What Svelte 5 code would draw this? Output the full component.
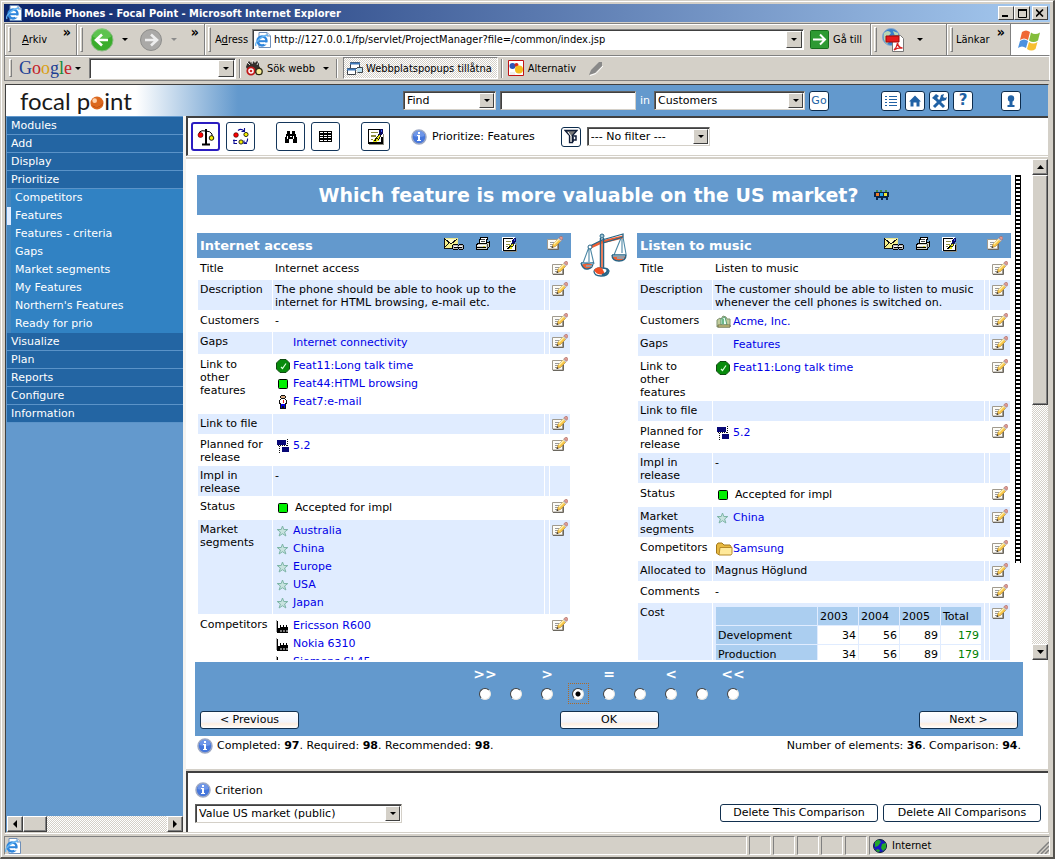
<script>
  const topMenu = ['Modules', 'Add', 'Display', 'Prioritize'];
  const subMenu = ['Competitors', 'Features', 'Features - criteria', 'Gaps', 'Market segments', 'My Features', "Northern's Features", 'Ready for prio'];
  const bottomMenu = ['Visualize', 'Plan', 'Reports', 'Configure', 'Information'];

  const elements = [
    {
      name: 'Internet access',
      rows: [
        { label: 'Title', text: 'Internet access' },
        { label: 'Description', text: 'The phone should be able to hook up to the internet for HTML browsing, e-mail etc.' },
        { label: 'Customers', text: '-' },
        { label: 'Gaps', links: [['', 'Internet connectivity']] },
        { label: 'Link to\nother\nfeatures', links: [['check', 'Feat11:Long talk time'], ['green', 'Feat44:HTML browsing'], ['person', 'Feat7:e-mail']] },
        { label: 'Link to file', text: '' },
        { label: 'Planned for release', links: [['release', '5.2']] },
        { label: 'Impl in release', text: '-', locked: true },
        { label: 'Status', status: 'Accepted for impl' },
        { label: 'Market segments', links: [['star', 'Australia'], ['star', 'China'], ['star', 'Europe'], ['star', 'USA'], ['star', 'Japan']] },
        { label: 'Competitors', links: [['factory', 'Ericsson R600'], ['factory', 'Nokia 6310'], ['factory', 'Siemens SL45']] }
      ]
    },
    {
      name: 'Listen to music',
      rows: [
        { label: 'Title', text: 'Listen to music' },
        { label: 'Description', text: 'The customer should be able to listen to music whenever the cell phones is switched on.' },
        { label: 'Customers', links: [['customer', 'Acme, Inc.']] },
        { label: 'Gaps', links: [['', 'Features']] },
        { label: 'Link to\nother\nfeatures', links: [['check', 'Feat11:Long talk time']] },
        { label: 'Link to file', text: '' },
        { label: 'Planned for release', links: [['release', '5.2']] },
        { label: 'Impl in release', text: '-', locked: true },
        { label: 'Status', status: 'Accepted for impl' },
        { label: 'Market segments', links: [['star', 'China']] },
        { label: 'Competitors', links: [['folder', 'Samsung']] },
        { label: 'Allocated to', text: 'Magnus Höglund' },
        { label: 'Comments', text: '-' },
        {
          label: 'Cost',
          cost: [
            ['Development', 34, 56, 89, 179],
            ['Production', 34, 56, 89, 179]
          ]
        }
      ]
    }
  ];

  const grades = ['>>', '', '>', '', '=', '', '<', '', '<<'];
  let grade = 3;
  let filter = '--- No filter ---';
  let criterion = 'Value US market (public)';
  let searchText = '';
  let googleText = '';
  let address = 'http://127.0.0.1/fp/servlet/ProjectManager?file=/common/index.jsp';
</script>

{#snippet ieIcon()}
  <svg class="ie" width="16" height="16" viewBox="0 0 16 16">
    <path d="M4 .5h8l3.500 3.500v11.500h-11.500z" fill="#fff" stroke="#6f8fb8" />
    <path d="M12 .5v3.500h3.500" fill="#dce8f6" stroke="#6f8fb8" />
    <circle cx="7" cy="9" r="4.500" fill="none" stroke="#2f86dc" stroke-width="2.400" />
    <path d="M4 9.200h7.500" stroke="#2f86dc" stroke-width="2" />
    <path d="M9 10.500h4v2h-4z" fill="#fff" />
    <path d="M1 14c-2-3 5-10 12-11" fill="none" stroke="#65b5f3" stroke-width="1.300" />
  </svg>
{/snippet}

{#snippet infoIcon()}
  <svg width="16" height="16" viewBox="0 0 16 16">
    <circle cx="8" cy="8" r="7" fill="#4677dc" stroke="#9ea9c4" stroke-width="1.500" />
    <path d="M2.500 7a5.500 5.500 0 0 1 11 0q-5 2-11 0" fill="#7fa4ee" opacity=".7" />
    <path d="M7 3h2v2h-2zM6 6h3v5h1v1h-4v-1h1v-4h-1z" fill="#fff" />
  </svg>
{/snippet}

{#snippet editIcon()}
  <svg width="16" height="16" viewBox="0 0 16 16">
    <path d="M.5 3.500h10v9.500h-10z" fill="#fdfcf7" stroke="#a09a8e" />
    <path d="M1 13.500h10.500v-6" fill="none" stroke="#6b675f" />
    <path d="M3 6.500h4M3 8.500h3M3 10.500h2" stroke="#9a9a9a" />
    <path d="M5 11.500l1-3.500 5.500-5.500 2.500 2.500-5.500 5.500z" fill="#f8c648" stroke="#a87e38" stroke-width=".6" />
    <path d="M6.800 8.300l5-5" stroke="#fff3b4" stroke-width="1.300" />
    <path d="M11 2.800l1-1 2.700 2.600-1 1z" fill="#c9ccd2" />
    <path d="M12 1.700l1.400-1.200h1.600l.8.800v1.500l-1.200 1.500z" fill="#e09a92" stroke="#a1655f" stroke-width=".6" />
    <path d="M4.500 12l.6-2 1.400 1.400z" fill="#222" />
  </svg>
{/snippet}

{#snippet noteIcon(size)}
  <svg width={size} height={size} viewBox="0 0 16 16" shape-rendering="crispEdges">
    <path d="M2 15h13v-9h1v10h-14z" fill="#8c8c80" />
    <path d="M.5.500h13v14h-13z" fill="#fff" />
    <path d="M12 1.500h-10.500v12.500h12.500v-6" fill="none" stroke="#000" stroke-width="1.200" />
    <path d="M4 4.500h6M4 7.500h4M4 10.500h2" stroke="#88883c" />
    <path d="M5 13l3-4 3 1v2l-2 1z" fill="#e6e619" />
    <path d="M8 10l4-5 1 2-2 4z" fill="#e6e619" stroke="#000" stroke-width=".8" />
    <path d="M5 13l3-3v2z" fill="#000" />
    <path d="M11 3l2-2h2v4l-2 2h-2z" fill="#08085e" />
    <path d="M13 2h1v2h-1z" fill="#4361ff" />
  </svg>
{/snippet}

{#snippet mailIcon()}
  <svg width="20" height="14" viewBox="0 0 20 14" shape-rendering="crispEdges">
    <path d="M.5 1.500h13v9h-13z" fill="#f4f08c" />
    <path d="M1 1h12v1l-6 5-6-5z" fill="#fffcc8" />
    <path d="M0 1.500h14M13.500 1v6" stroke="#e8e48c" />
    <path d="M.5 1v10h9M1 2l6 5 6-5M1 10l4-4" fill="none" stroke="#111" />
    <path d="M8.500 8.500l1-1h4l1 1 1-1h3l1 1v3l-1 1h-3l-1-1-1 1h-4l-1-1z" fill="#b9b9b9" stroke="#000" />
    <path d="M10 10.500h8" stroke="#000" />
    <path d="M10 9.500h3M15 9.500h3" stroke="#fff" />
  </svg>
{/snippet}

{#snippet printIcon()}
  <svg width="14" height="14" viewBox="0 0 14 14" shape-rendering="crispEdges">
    <path d="M4.500.500h7l-1.500 6h-7z" fill="#fff" stroke="#000" />
    <path d="M5 2.500h4M5 4.500h4" stroke="#444" />
    <path d="M.5 7.500l2-1h8l3-2v5l-2.500 3h-10.500z" fill="#d2d2c8" stroke="#000" />
    <path d="M1 8.500h9" stroke="#fff" />
    <path d="M1 10.500h9" stroke="#000" />
    <path d="M7 9.500h2" stroke="#e3d220" />
    <path d="M11.500 7v4" stroke="#555" />
  </svg>
{/snippet}

{#snippet linkIcon(kind)}
  <span class="link-icon">
    {#if kind === 'check'}
      <svg width="14" height="14" viewBox="0 0 14 14">
        <path d="M4 .5h6l3.500 3.500v6l-3.500 3.500h-6l-3.500-3.500v-6z" fill="#078b0b" stroke="#114b13" />
        <path d="M5 8l1.500 1.500 3.500-5" fill="none" stroke="#d9ffda" stroke-width="1.200" />
      </svg>
    {:else if kind === 'green'}
      <svg width="14" height="14" viewBox="0 0 14 14">
        <rect x="2.500" y="2.500" width="9" height="9" rx="1" fill="#00f100" stroke="#000" />
      </svg>
    {:else if kind === 'person'}
      <svg width="14" height="14" viewBox="0 0 14 14" shape-rendering="crispEdges">
        <path d="M5 0h4v1h1v2h-1v1h1v1h1v4h-1v5h-6v-5h-1v-4h1v-1h1v-1h-1v-2h1z" fill="#111" />
        <path d="M5 1h4v2h-4z" fill="#d9aa80" />
        <path d="M5 4h4v1h1v3h-1v1h-4v-1h-1v-3h1z" fill="#fff" />
        <path d="M6.500 4.500h1v3h-1z" fill="#e12020" />
        <path d="M5 9h4v4h-1v-2h-2v2h-1z" fill="#0000e8" />
      </svg>
    {:else if kind === 'release'}
      <svg width="14" height="14" viewBox="0 0 14 14" shape-rendering="crispEdges">
        <path d="M1 1h9v5h-9zM6 8h7v5h-7z" fill="#080876" />
        <path d="M11.500 0v7M3.500 7v7" stroke="#111" stroke-dasharray="1 1" />
        <path d="M2 6.500h9" stroke="#111" stroke-dasharray="1 1" />
      </svg>
    {:else if kind === 'star'}
      <svg width="14" height="14" viewBox="0 0 14 14">
        <path d="M6.500 2l1.300 3.500h4l-3.200 2.500 1.300 4-3.400-2.300-3.400 2.300 1.300-4-3.200-2.500h4z" fill="#c8e3df" stroke="#7eb5a7" />
      </svg>
    {:else if kind === 'factory'}
      <svg width="14" height="14" viewBox="0 0 14 14" shape-rendering="crispEdges">
        <path d="M1 2h1v7h2v-3h1v2h2v-2h1v2h2v-2h1v2h1v6h-11z" fill="#000" />
        <path d="M0 1h1v12h-1z" fill="#aaa" />
        <path d="M4 11h2v2h-2zM7 11h2v2h-2zM10 11h2v2h-2z" fill="#777" />
      </svg>
    {:else if kind === 'customer'}
      <svg width="16" height="14" viewBox="0 0 16 14">
        <path d="M1 5l3-2 1 1 2-3 3 1 1 2h3v8h-13z" fill="#c2cc9c" stroke="#7f9370" />
        <path d="M5 4l4-2 2 8h-6z" fill="#eafff4" stroke="#559c73" />
        <path d="M7 4v5" stroke="#42a267" stroke-width="1.500" />
        <path d="M2 10h12v2h-12z" fill="#e4df8e" stroke="#74724d" />
      </svg>
    {:else if kind === 'folder'}
      <svg width="17" height="14" viewBox="0 0 17 14">
        <path d="M.5 3l1.500-2h4l2 2h6l1 1.500v7l-1 1h-12l-1.500-1.500z" fill="#e8b940" stroke="#a37818" />
        <path d="M4 5.500h12v6l-1 1.500h-12z" fill="#ffe99a" stroke="#b78b28" />
      </svg>
    {/if}
  </span>
{/snippet}

{#snippet panel(element)}
  <section class="panel">
    <div class="panel-head">
      <h2>{element.name}</h2>
      <a href="#mail" aria-label="Mail link">{@render mailIcon()}</a>
      <a href="#print" aria-label="Print">{@render printIcon()}</a>
      <a href="#note" aria-label="Note" class="note">{@render noteIcon(15)}</a>
      <a href="#edit" aria-label="Edit">{@render editIcon()}</a>
    </div>
    <table class="attributes">
      <colgroup><col class="c-label"><col><col class="c-gap"><col class="c-edit"></colgroup>
      <tbody>
        {#each element.rows as row}
          <tr>
            <th scope="row">{row.label}</th>
            <td class:linked={row.links || row.status}>
              {#if row.links}
                {#each row.links as [kind, text]}
                  <div class="line">{@render linkIcon(kind)}<a href="#element">{text}</a></div>
                {/each}
              {:else if row.status}
                <div class="line status">{@render linkIcon('green')}<span>{row.status}</span></div>
              {:else if row.cost}
                <table class="cost">
                  <thead>
                    <tr><th class="c-name"></th><th>2003</th><th>2004</th><th>2005</th><th>Total</th></tr>
                  </thead>
                  <tbody>
                    {#each row.cost as [name, ...values]}
                      <tr><th scope="row">{name}</th>{#each values as value}<td>{value}</td>{/each}</tr>
                    {/each}
                  </tbody>
                </table>
              {:else}
                {row.text}
              {/if}
            </td>
            <td></td>
            <td>{#if !row.locked}<a href="#edit" aria-label="Edit {row.label}">{@render editIcon()}</a>{/if}</td>
          </tr>
        {/each}
      </tbody>
    </table>
  </section>
{/snippet}

<div class="window">
  <header class="titlebar">
    {@render ieIcon()}
    <span class="title">Mobile Phones - Focal Point - Microsoft Internet Explorer</span>
    <button class="win-btn" aria-label="Minimize"><svg width="8" height="8"><path d="M0 7h6" stroke="#000" stroke-width="2" /></svg></button>
    <button class="win-btn" aria-label="Maximize"><svg width="9" height="9"><path d="M.5 1h8v7.500h-8z" fill="none" stroke="#000" /><path d="M0 1h9" stroke="#000" stroke-width="2" /></svg></button>
    <button class="win-btn close" aria-label="Close"><svg width="8" height="8"><path d="M0 .5l7 7M7 .5l-7 7" stroke="#000" stroke-width="1.600" /></svg></button>
  </header>

  <div class="toolbar first">
    <div class="band menu"><i class="grip"></i><a href="#arkiv"><u>A</u>rkiv</a><span class="more">»</span></div>
    <div class="band nav">
      <i class="grip"></i>
      <button class="flat" aria-label="Back">
        <svg width="24" height="24" viewBox="0 0 24 24">
          <circle cx="12" cy="12" r="11" fill="#3aad2c" stroke="#8bbb85" />
          <path d="M3 9a9 9 0 0 1 18 0q-9 4-18 0" fill="#75d267" opacity=".6" />
          <path d="M18 12h-11M12 6.500l-6 5.500 6 5.500" fill="none" stroke="#fff" stroke-width="2.600" />
        </svg>
      </button>
      <i class="caret"></i>
      <button class="flat" aria-label="Forward">
        <svg width="24" height="24" viewBox="0 0 24 24">
          <circle cx="12" cy="12" r="10.500" fill="#aaa9a7" stroke="#8e8e8c" />
          <path d="M6 12h11M12 6.500l6 5.500-6 5.500" fill="none" stroke="#eee" stroke-width="2.600" />
        </svg>
      </button>
      <i class="caret dim"></i>
      <span class="more">»</span>
    </div>
    <div class="band address">
      <i class="grip"></i>
      <label for="address">A<u>d</u>ress</label>
      <div class="entry">
        {@render ieIcon()}
        <input id="address" type="text" bind:value={address}>
        <button class="drop" aria-label="Show addresses"><i class="caret"></i></button>
      </div>
      <button class="flat go-to">
        <svg width="19" height="19" viewBox="0 0 19 19">
          <rect x=".5" y=".5" width="18" height="18" rx="1" fill="#2e9a33" stroke="#166f1b" />
          <path d="M3 9.500h11M10 4.500l5 5-5 5" fill="none" stroke="#fff" stroke-width="2" />
        </svg>
        Gå till
      </button>
    </div>
    <div class="band pdf">
      <i class="grip"></i>
      <button class="flat" aria-label="Convert to PDF">
        <svg width="24" height="24" viewBox="0 0 24 24">
          <circle cx="10" cy="9" r="8.500" fill="#3a7fc8" stroke="#84a8cf" />
          <path d="M3 5q4-4 7 0l-3 4 3 3-4 4q-5-4-3-11M12 3l5 2v4l-3-1z" fill="#b8d7b4" />
          <path d="M11.500 7.500h8l3 3v13h-11z" fill="#fff" stroke="#777" />
          <path d="M5 8h13v6h-13z" fill="#e61b1b" stroke="#9e0808" />
          <path d="M13 22q3-3 3.500-7 1 5 5 5-5-.500-8.500 2" fill="none" stroke="#d82323" stroke-width="1.300" />
        </svg>
      </button>
      <i class="caret"></i>
    </div>
    <div class="band links"><i class="grip"></i><a href="#lankar">Länkar</a><span class="more">»</span></div>
    <div class="flag">
      <svg width="24" height="24" viewBox="0 0 24 24">
        <path d="M4 4q4-3 8 0l-2 8q-4-3-8 0z" fill="#ef6836" />
        <path d="M13 4.500q4 3 9 0l-2 8q-5 3-9 0z" fill="#84bd3b" />
        <path d="M2 13q4-3 8 0l-2 7q-4-3-8 0z" fill="#4c91df" />
        <path d="M11 14q4 3 8.500 0l-2 7q-4 3-8.500 0z" fill="#f7bf31" />
      </svg>
    </div>
  </div>

  <div class="toolbar second">
    <i class="grip"></i>
    <a class="google" href="#google"><span class="b">G</span><span class="r">o</span><span class="y">o</span><span class="b">g</span><span class="g">l</span><span class="r">e</span></a>
    <i class="caret"></i>
    <div class="entry google-box">
      <input type="text" aria-label="Google search" bind:value={googleText}>
      <button class="drop" aria-label="Search history"><i class="caret"></i></button>
    </div>
    <i class="divider"></i>
    <button class="flat search-web">
      <svg width="17" height="16" viewBox="0 0 17 16">
        <path d="M1 4l2-3 2 2 2-2 2 2 2-2 2 2v3l2 3v4h-12l-3-6z" fill="#33302d" />
        <path d="M1 2l3 3M7 0l-1 4M13 1l-2 4" stroke="#fff" stroke-width=".8" />
        <circle cx="5" cy="11" r="3.700" fill="#fff" stroke="#c01818" stroke-width="1.800" />
        <circle cx="13" cy="11.500" r="3.200" fill="#f5e994" stroke="#2d2a16" stroke-width="1.300" />
        <circle cx="5" cy="11" r="1.300" fill="#d32a2a" />
      </svg>
      Sök webb
    </button>
    <i class="caret"></i>
    <i class="divider"></i>
    <button class="pressed">
      <svg width="16" height="15" viewBox="0 0 16 15">
        <path d="M3.500 1.500h9v6h-9zM.5 7.500h8v6h-8z" fill="#fff" stroke="#3f4348" />
        <path d="M3 2.500h10M0 8.500h9" stroke="#3e79ba" stroke-width="2" />
        <path d="M10 6.500h5.500v5h-5" fill="#bde1f1" stroke="#3f4348" />
      </svg>
      Webbplatspopups tillåtna
    </button>
    <i class="divider"></i>
    <button class="flat options">
      <svg width="16" height="16" viewBox="0 0 16 16">
        <path d="M.5.5h15v15h-15z" fill="#fff" stroke="#c21313" />
        <circle cx="4.500" cy="6" r="3" fill="#2b55b8" /><circle cx="8.500" cy="5" r="2" fill="#d7281c" />
        <circle cx="11" cy="9.500" r="4" fill="#f2bd1f" /><path d="M2 12h5v3h-5z" fill="#eee" />
      </svg>
      Alternativ
    </button>
    <svg class="pen" width="16" height="15" viewBox="0 0 16 15">
      <path d="M1 14l2-5 8-8h3v4l-7 7z" fill="#888" /><path d="M2 14.500l6-2 7-7.500" fill="none" stroke="#fff" />
    </svg>
  </div>

  <div class="page">
    <header class="banner">
      <div class="logo">
        <span>focal p</span><svg width="14" height="14" viewBox="0 0 15 15">
          <circle cx="7.500" cy="7.500" r="7" fill="#dc681f" /><circle cx="5" cy="5" r="2.500" fill="#ffd2ad" /><path d="M2 10q7 5 12-3a7 7 0 0 1-12 3" fill="#a83a0a" />
        </svg><span>int</span>
      </div>
      <form class="search" onsubmit={(e) => e.preventDefault()}>
        <div class="select find"><select aria-label="Action"><option>Find</option></select><i class="arrow"></i></div>
        <input class="text" type="text" aria-label="Search text" bind:value={searchText}>
        <span>in</span>
        <div class="select scope"><select aria-label="Module"><option>Customers</option></select><i class="arrow"></i></div>
        <button class="small-btn">Go</button>
      </form>
      <nav class="shortcuts">
        <button class="small-btn" aria-label="List">
          <svg width="14" height="14" viewBox="0 0 14 14" shape-rendering="crispEdges"><path d="M1 2.500h2M1 5.500h2M1 8.500h2M1 11.500h2M5 2.500h8M5 5.500h8M5 8.500h8M5 11.500h8" stroke="#2162a5" /></svg>
        </button>
        <button class="small-btn" aria-label="Home">
          <svg width="14" height="14" viewBox="0 0 14 14"><path d="M7 1.500l6 6h-1.500v5h-3v-4h-3v4h-3v-5h-1.500z" fill="#2162a5" /></svg>
        </button>
        <button class="small-btn" aria-label="Tools">
          <svg width="16" height="16" viewBox="0 0 16 16">
            <path d="M4 5l9 9M12 5l-9 9" stroke="#2162a5" stroke-width="3" />
            <path d="M1 5l4-4 3 2-4 4zM10 2l3-1-1 3 2 1 2-1-1 3-3 1-3-2z" fill="#2162a5" />
          </svg>
        </button>
        <button class="small-btn question" aria-label="Help">?</button>
        <button class="small-btn last" aria-label="Log out">
          <svg width="14" height="14" viewBox="0 0 14 14"><circle cx="7" cy="4.500" r="3.200" fill="#2162a5" /><path d="M5.500 7h3v4h2v2h-7v-2h2z" fill="#2162a5" /></svg>
        </button>
      </nav>
    </header>

    <div class="frames">
      <aside>
        <nav class="side">
          {#each topMenu as item}<a href="#menu">{item}</a>{/each}
          {#each subMenu as item}<a href="#menu" class="sub" class:active={item === 'Features'}>{item}</a>{/each}
          {#each bottomMenu as item}<a href="#menu">{item}</a>{/each}
        </nav>
        <div class="hscroll">
          <button aria-label="Scroll left"><svg width="5" height="8"><path d="M4 0v8l-4-4z" /></svg></button>
          <i class="thumb"></i>
          <i class="track"></i>
          <button aria-label="Scroll right"><svg width="5" height="8"><path d="M0 0v8l4-4z" /></svg></button>
        </div>
      </aside>

      <main>
        <div class="tools">
          <button class="tool current" aria-label="Compare">
            <svg width="18" height="18" viewBox="0 0 18 18">
              <path d="M2.500 6v-2q2-2 6-1 5 0 6.500 3v2" fill="none" stroke="#000" />
              <path d="M9 1v15M5 16.500h8" stroke="#000" stroke-width="2" />
              <circle cx="3.500" cy="7" r="2.500" fill="#f00" stroke="#400" stroke-width=".6" />
              <circle cx="14.500" cy="10" r="2.300" fill="#f5ee00" stroke="#000" stroke-width=".9" />
            </svg>
          </button>
          <button class="tool" aria-label="Consistency">
            <svg width="18" height="18" viewBox="0 0 18 18">
              <path d="M6 2.500q3-2.500 6 .5M12.500 0v3.500h-3M2 11.500v4h3M1 12.500h4M15.500 10.500q.5 4-3 4.500M12 12.500v3h3" fill="none" stroke="#0b0b92" stroke-width="1.100" />
              <circle cx="4" cy="7" r="2.300" fill="#f00" stroke="#400" stroke-width=".7" />
              <circle cx="14" cy="6.500" r="2.100" fill="#f5ee00" stroke="#000" stroke-width=".8" />
              <circle cx="9" cy="14" r="2.100" fill="#f5ee00" stroke="#000" stroke-width=".8" />
            </svg>
          </button>
          <button class="tool apart" aria-label="Find">
            <svg width="12" height="12" viewBox="0 0 12 12" shape-rendering="crispEdges"><path d="M2 0h3v3h2v-3h3v3h1v3h1v6h-4v-4h-4v4h-4v-6h1v-3h1z" fill="#000" /><path d="M2 5h1v3h-1zM8 5h1v3h-1zM5 5h2v1h-2z" fill="#fff" /></svg>
          </button>
          <button class="tool" aria-label="Table">
            <svg width="14" height="12" viewBox="0 0 14 12" shape-rendering="crispEdges">
              <path d="M0 0h13v11h-13z" fill="#000" />
              <path d="M1 1h3v1h-3zM5 1h3v1h-3zM9 1h3v1h-3zM1 4h3v1h-3zM5 4h3v1h-3zM9 4h3v1h-3zM1 6h3v1h-3zM5 6h3v1h-3zM9 6h3v1h-3zM1 9h3v1h-3zM5 9h3v1h-3zM9 9h3v1h-3z" fill="#fff" />
            </svg>
          </button>
          <button class="tool apart" aria-label="Note">{@render noteIcon(17)}</button>
          <div class="where">{@render infoIcon()}<span>Prioritize: Features</span></div>
          <button class="small-btn filter-btn" aria-label="Filter">
            <svg width="14" height="15" viewBox="0 0 14 15">
              <path d="M1 1.500h12l-4.500 5v7h-3v-7z" fill="#777" stroke="#101d38" stroke-width="1.300" />
              <path d="M9 6v7M10 7h2v4h-3" fill="none" stroke="#101d38" stroke-width="1.500" /><path d="M4 3l3 4v6" stroke="#fff" fill="none" />
            </svg>
          </button>
          <div class="select filter"><select aria-label="Filter" bind:value={filter}><option>--- No filter ---</option></select><i class="arrow"></i></div>
        </div>

        <div class="viewport">
          <div class="content">
            <div class="body">
              <h1>
                Which feature is more valuable on the US market?
                <svg width="15" height="10" viewBox="0 0 15 10" shape-rendering="crispEdges">
                  <path d="M0 2h15v5h-1v3h-2v-2h-3v2h-2v-2h-3v2h-2v-3h-2z" fill="#07254b" />
                  <path d="M2 0h2v2h-2zM6 0h2v2h-2zM11 0h2v2h-2z" fill="#438b43" />
                  <path d="M2 3h3v3h-3z" fill="#f27a25" /><path d="M6 3h3v3h-3z" fill="#25a7ee" /><path d="M10 3h3v3h-3z" fill="#f3e632" />
                </svg>
              </h1>
              <div class="compare">
                {@render panel(elements[0])}
                <svg class="scales" width="48" height="44" viewBox="0 0 48 44">
                  <path d="M11 14l11-5 21-5" fill="none" stroke="#ee5f33" stroke-width="3" />
                  <path d="M10 13l12-6 21-6v3l-20 6" fill="none" stroke="#266486" stroke-width="1.300" />
                  <path d="M20.500 5v32M23.500 5v32" stroke="#266486" stroke-width="1.500" /><path d="M22 9v28" stroke="#ee5f33" stroke-width="1.500" />
                  <circle cx="22" cy="3" r="2" fill="#9bc2d3" stroke="#266486" />
                  <path d="M9 14l-6 16M10 14l4 17M9 16v13M41 5l-7 17M43 4l3 17M42 6v14" fill="none" stroke="#4d88a6" stroke-width="1.100" />
                  <circle cx="10" cy="14" r="2" fill="#fff" stroke="#266486" />
                  <path d="M1 30h12q0 5-5 6t-7-6" fill="#ee5f33" stroke="#266486" stroke-width="1.300" />
                  <path d="M2 31q5-3 11 0M6 33h6" fill="none" stroke="#7eb0c9" stroke-width="1.500" />
                  <path d="M32 22h14q0 6-7 6t-7-6" fill="#ee5f33" stroke="#266486" stroke-width="1.300" />
                  <path d="M33 23h12M37 25h7" stroke="#7eb0c9" stroke-width="1.300" />
                  <path d="M14 38q2-4 8-3 6 0 7 3-1 5-8 5t-7-5" fill="#fff" stroke="#266486" stroke-width="1.300" />
                  <path d="M14 37q3-4 8-2l3 6q-8 2-11-4" fill="#f04f24" />
                  <path d="M27 36q2 4-5 6" fill="none" stroke="#266486" stroke-width="2" />
                </svg>
                {@render panel(elements[1])}
              </div>
            </div>
            <div class="strip"></div>
          </div>
          <div class="vscroll">
            <button aria-label="Scroll up"><svg width="7" height="4"><path d="M0 4h7l-3.500-4z" /></svg></button>
            <i class="thumb"></i>
            <i class="track"></i>
            <button aria-label="Scroll down"><svg width="7" height="4"><path d="M0 0h7l-3.500 4z" /></svg></button>
          </div>
        </div>

        <div class="voting">
          <div class="vote-bar">
            <div class="grades">
              {#each grades as sign, i}
                <label>
                  <span>{sign}</span>
                  <input type="radio" name="grade" value={i} bind:group={grade} aria-label="Grade {i + 1}">
                </label>
              {/each}
            </div>
            <div class="buttons">
              <button class="push">&lt; Previous</button>
              <button class="push">OK</button>
              <button class="push">Next &gt;</button>
            </div>
          </div>
          <div class="counts">
            {@render infoIcon()}
            <span>Completed: <b>97</b>. Required: <b>98</b>. Recommended: <b>98</b>.</span>
            <span class="right">Number of elements: <b>36</b>. Comparison: <b>94</b>.</span>
          </div>
        </div>

        <div class="criterion">
          <label for="criterion">{@render infoIcon()}Criterion</label>
          <div class="criterion-row">
            <div class="select crit"><select id="criterion" bind:value={criterion}><option>Value US market (public)</option></select><i class="arrow"></i></div>
            <button class="push light">Delete This Comparison</button>
            <button class="push light">Delete All Comparisons</button>
          </div>
        </div>
      </main>
    </div>
  </div>

  <footer class="statusbar">
    <div class="cell wide">{@render ieIcon()}</div>
    <div class="cell"></div><div class="cell"></div><div class="cell"></div><div class="cell"></div><div class="cell"></div>
    <div class="cell zone">
      <svg width="14" height="14" viewBox="0 0 14 14">
        <circle cx="7" cy="7" r="6.500" fill="#1717c4" stroke="#123" />
        <path d="M2 3q4-4 6 0l-3 4-3 1zM9 5l4-1v5l-3 3-2-3zM4 10l3 1-1 2-3-1z" fill="#22a82a" />
      </svg>
      Internet
      <svg class="resize" width="13" height="13" viewBox="0 0 13 13"><path d="M1 13l12-12M5 13l8-8M9 13l4-4" stroke="#808080" stroke-width="1.500" /></svg>
    </div>
  </footer>
</div>

<style>
  :global(body) {
    margin: 0;
    background: #d4d0c8;
  }

  .window {
    box-sizing: border-box;
    height: 100vh;
    padding: 3px 3px 2px 3px;
    border: 1px solid #d4d0c8;
    border-right: 2px solid #55534e;
    border-bottom: 2px solid #55534e;
    box-shadow: inset 1px 1px #fff;
    background: #d4d0c8;
    display: flex;
    flex-direction: column;
    color: #000;
    font: 11px/13px Verdana, "DejaVu Sans", sans-serif;
  }

  .window :is(button, input, select) {
    font: inherit;
    color: inherit;
    margin: 0;
    box-sizing: border-box;
    border-radius: 0;
  }

  svg {
    display: block;
    flex: none;
  }

  a {
    color: #0000e6;
    text-decoration: none;
  }

  .titlebar,
  .toolbar,
  .statusbar {
    font-family: Tahoma, "DejaVu Sans Condensed", "DejaVu Sans", sans-serif;
  }

  .titlebar {
    height: 18px;
    flex: none;
    display: flex;
    align-items: center;
    padding: 0 2px;
    background: linear-gradient(90deg, #0a246a, #a6caf0);
    color: #fff;
    font-weight: bold;
  }

  .title {
    flex: 1;
    padding-left: 2px;
    white-space: nowrap;
  }

  .win-btn {
    width: 16px;
    height: 14px;
    padding: 0;
    display: flex;
    align-items: center;
    justify-content: center;
    background: #d4d0c8;
    border: 1px solid;
    border-color: #fff #404040 #404040 #fff;
  }

  .win-btn.close {
    margin-left: 2px;
  }

  .toolbar {
    flex: none;
    display: flex;
    align-items: center;
    border: 1px solid #808080;
    border-right-color: #fff;
    box-shadow: inset 0 1px #fff;
  }

  .toolbar a {
    color: #000;
  }

  .toolbar.first {
    height: 33px;
    margin-top: 1px;
    box-sizing: border-box;
  }

  .toolbar.second {
    height: 25px;
    box-sizing: border-box;
    border-top: 0;
    padding-left: 4px;
  }

  .band {
    align-self: stretch;
    display: flex;
    align-items: center;
    box-sizing: border-box;
    padding-left: 3px;
    border-right: 1px solid #808080;
    box-shadow: inset 1px 1px #fff;
    white-space: nowrap;
  }

  .grip {
    width: 3px;
    height: 25px;
    flex: none;
    box-sizing: border-box;
    border: 1px solid;
    border-color: #fff #808080 #808080 #fff;
  }

  .toolbar.second .grip {
    height: 18px;
  }

  .more {
    align-self: flex-start;
    margin-left: auto;
    padding: 2px 5px 0 0;
    font-size: 14px;
    font-weight: bold;
  }

  .menu {
    width: 72px;
  }

  .menu a {
    margin-left: 11px;
  }

  .nav {
    width: 128px;
  }

  .nav .flat {
    margin-left: 7px;
  }

  .address {
    flex: 1;
    gap: 4px;
  }

  .pdf {
    width: 76px;
    gap: 4px;
  }

  .links {
    width: 64px;
  }

  .links a {
    margin-left: 3px;
  }

  .flag {
    align-self: stretch;
    width: 38px;
    display: flex;
    align-items: center;
    justify-content: center;
    background: #fff;
  }

  .caret {
    flex: none;
    width: 0;
    height: 0;
    margin: 0 4px 0 8px;
    border: 3px solid transparent;
    border-top-color: #000;
    border-bottom: 0;
  }

  .caret.dim {
    border-top-color: #8b8b8b;
  }

  .flat {
    padding: 0;
    border: 0;
    background: none;
    display: flex;
    align-items: center;
    gap: 4px;
    white-space: nowrap;
  }

  .window .go-to {
    margin: 0 8px 0 2px;
  }

  .entry {
    flex: 1;
    height: 21px;
    box-sizing: border-box;
    display: flex;
    align-items: center;
    background: #fff;
    border: 1px solid;
    border-color: #808080 #fff #fff #808080;
    box-shadow: inset 1px 1px #404040;
    padding: 1px;
  }

  .entry .ie {
    margin-left: 1px;
  }

  .entry input {
    flex: 1;
    min-width: 0;
    border: 0;
    padding: 0 3px;
    background: none;
    outline: none;
  }

  .drop {
    width: 16px;
    height: 17px;
    padding: 0;
    display: flex;
    align-items: center;
    justify-content: center;
    background: #d4d0c8;
    border: 1px solid;
    border-color: #fff #404040 #404040 #fff;
  }

  .drop .caret {
    margin: 0;
  }

  .google {
    margin-left: 7px;
    font: 18px/20px "Liberation Serif", serif;
  }

  .toolbar.second > .google + .caret {
    margin: 0 8px 0 3px;
  }

  .b { color: #1c3f94; }
  .r { color: #c32027; }
  .y { color: #d99f14; }
  .g { color: #158c39; }

  .google-box {
    flex: none;
    width: 147px;
  }

  .divider {
    width: 2px;
    height: 19px;
    flex: none;
    margin: 0 5px 0 3px;
    box-sizing: border-box;
    border-left: 1px solid #808080;
    border-right: 1px solid #fff;
  }

  .pressed {
    height: 22px;
    padding: 0 5px 0 3px;
    display: flex;
    align-items: center;
    gap: 3px;
    white-space: nowrap;
    border: 1px solid;
    border-color: #808080 #fff #fff #808080;
    background: repeating-conic-gradient(#fff 0 25%, #d4d0c8 0 50%) 0 0 / 2px 2px;
  }

  .window .options {
    padding-right: 12px;
  }

  /* page area */
  .page {
    flex: 1;
    min-height: 0;
    margin: 3px 1px 0 1px;
    border: 1px solid #404040;
    border-right-color: #d4d0c8;
    border-bottom-color: #d4d0c8;
    box-shadow: 0 1px #fff;
    display: flex;
    flex-direction: column;
    background: #6399cd;
  }

  .banner {
    flex: none;
    height: 31px;
    display: flex;
    align-items: center;
    background: linear-gradient(90deg, #fff 130px, #6399cd 232px);
    color: #fff;
  }

  .logo {
    flex: 1;
    display: flex;
    align-items: center;
    padding-left: 14px;
    color: #1a1a1a;
    font: 24px/28px Lato, "Open Sans", sans-serif;
  }

  .logo svg {
    margin-top: 4px;
  }

  .search {
    display: flex;
    align-items: center;
    gap: 4px;
  }

  .select {
    position: relative;
  }

  .select select {
    width: 100%;
    height: 19px;
    padding: 0 18px 0 3px;
    color: #000;
    background: #fff;
    border: 1px solid;
    border-color: #606060 #d4d0c8 #d4d0c8 #606060;
    box-shadow: inset 1px 1px #404040;
    appearance: none;
    outline: none;
  }

  .arrow {
    position: absolute;
    top: 2px;
    right: 2px;
    width: 15px;
    height: 15px;
    box-sizing: border-box;
    border: 1px solid;
    border-color: #fff #404040 #404040 #fff;
    background: #d4d0c8;
    pointer-events: none;
  }

  .arrow::after {
    content: "";
    position: absolute;
    top: 5px;
    left: 4px;
    border: 3px solid transparent;
    border-top-color: #000;
    border-bottom: 0;
  }

  .find { width: 93px; }
  .scope { width: 151px; }
  .filter { width: 123px; }
  .crit { width: 207px; }

  .search .text {
    width: 136px;
    height: 19px;
    color: #000;
    border: 1px solid;
    border-color: #606060 #d4d0c8 #d4d0c8 #606060;
    box-shadow: inset 1px 1px #404040;
  }

  .window .small-btn {
    width: 20px;
    height: 20px;
    padding: 0;
    display: flex;
    align-items: center;
    justify-content: center;
    color: #2162a5;
    background: #fff;
    border: 1px solid #0c2c4d;
    border-radius: 3px;
  }

  .shortcuts {
    display: flex;
    gap: 4px;
    padding: 0 27px 0 52px;
  }

  .window .small-btn.last {
    margin-left: 24px;
  }

  .window .question {
    font-size: 15px;
    font-weight: bold;
  }

  .frames {
    flex: 1;
    min-height: 0;
    display: flex;
  }

  aside {
    width: 176px;
    flex: none;
    display: flex;
    flex-direction: column;
    padding-left: 1px;
  }

  .side {
    flex: 1;
    min-height: 0;
    padding-top: 1px;
  }

  .side a {
    display: block;
    height: 18px;
    box-sizing: border-box;
    padding-left: 4px;
    line-height: 18px;
    color: #fff;
    background: #2365a3;
    border-bottom: 1px solid #5b93c8;
  }

  .side .sub {
    background: #3182c3;
    border-bottom: 0;
    border-left: 4px solid #4586bd;
  }

  .side .active {
    border-left-color: #e0ecff;
  }

  .hscroll,
  .vscroll {
    display: flex;
    flex: none;
  }

  .vscroll {
    flex-direction: column;
    width: 16px;
  }

  .hscroll {
    height: 16px;
  }

  .hscroll button,
  .vscroll button,
  .thumb {
    flex: none;
    width: 16px;
    height: 16px;
    box-sizing: border-box;
    padding: 0;
    display: flex;
    align-items: center;
    justify-content: center;
    background: #d4d0c8;
    border: 1px solid;
    border-color: #fff #404040 #404040 #fff;
    box-shadow: inset -1px -1px #808080;
  }

  .hscroll .thumb {
    width: 24px;
  }

  .vscroll .thumb {
    height: 230px;
  }

  .track {
    flex: 1;
    background: repeating-conic-gradient(#fff 0 25%, #d4d0c8 0 50%) 0 0 / 2px 2px;
  }

  main {
    flex: 1;
    min-width: 0;
    border-left: 3px solid #f4f3f0;
    display: flex;
    flex-direction: column;
    background: #fff;
  }

  .tools {
    flex: none;
    height: 37px;
    border-top: 2px solid #404040;
    border-left: 2px solid #404040;
    border-bottom: 1px solid #d4d0c8;
    display: flex;
    align-items: center;
    gap: 6px;
    padding-left: 3px;
  }

  .window .tool {
    width: 29px;
    height: 29px;
    padding: 0;
    display: flex;
    align-items: center;
    justify-content: center;
    background: #fff;
    border: 1px solid #14365b;
    border-radius: 3px;
  }

  .window .tool.current {
    border: 2px solid #2a1cc0;
  }

  .window .tool.apart {
    margin-left: 15px;
  }

  .where {
    display: flex;
    align-items: center;
    gap: 5px;
    margin: 0 20px 0 15px;
  }

  .viewport {
    flex: 1;
    min-height: 0;
    display: flex;
    border-top: 2px solid #d4d0c8;
    margin-top: 1px;
    padding-left: 2px;
  }

  .content {
    flex: 1;
    min-width: 0;
    overflow: hidden;
    display: flex;
    gap: 4px;
    padding: 16px 11px 0 9px;
  }

  .body {
    flex: 1;
    min-width: 0;
  }

  .strip {
    width: 6px;
    height: 388px;
    flex: none;
    box-sizing: border-box;
    border: solid #000;
    border-width: 0 1px;
    background: repeating-linear-gradient(#000 0 2px, #fff 2px 4px);
  }

  h1 {
    display: flex;
    align-items: center;
    justify-content: center;
    gap: 16px;
    height: 40px;
    margin: 0 0 18px;
    background: #6399cd;
    color: #fff;
    font-size: 19px;
    white-space: nowrap;
  }

  .compare {
    display: flex;
    align-items: flex-start;
  }

  .scales {
    margin: 0 9px;
  }

  .panel {
    flex: 1;
    min-width: 0;
  }

  .panel-head {
    display: flex;
    align-items: center;
    gap: 12px;
    height: 25px;
    padding: 0 8px 3px 3px;
    box-sizing: border-box;
    background: #6399cd;
  }

  .panel-head .note {
    margin-right: 18px;
  }

  h2 {
    flex: 1;
    margin: 0;
    padding-top: 3px;
    color: #fff;
    font-size: 13px;
    line-height: 16px;
  }

  .attributes {
    width: 100%;
    table-layout: fixed;
    border-spacing: 1px;
  }

  .c-label { width: 74px; }
  .c-gap { width: 4px; }
  .c-edit { width: 20px; }

  th,
  td {
    padding: 3px 2px 1px;
    text-align: left;
    vertical-align: top;
    font-weight: normal;
  }

  th {
    white-space: pre-line;
  }

  .attributes > tbody > tr > td:nth-child(3) {
    padding: 0;
  }

  .attributes > tbody > tr > td:nth-child(4) {
    padding: 2px;
  }

  .attributes > tbody > tr > .linked {
    padding: 1px 2px 3px;
  }

  .attributes > tbody > tr:nth-child(even) > :is(th, td) {
    background: #e0ecff;
  }

  .attributes > tbody > tr > * {
    height: 16px;
  }

  .line {
    display: flex;
    align-items: center;
    height: 18px;
  }

  .link-icon {
    width: 18px;
    flex: none;
    padding: 1px 0 0 1px;
    box-sizing: border-box;
  }

  .status {
    gap: 2px;
  }

  .cost {
    border-spacing: 1px;
    width: 100%;
    table-layout: fixed;
  }

  .cost :is(th, td) {
    height: 14px;
    padding: 2px;
    vertical-align: middle;
  }

  .cost th {
    background: #abcef0;
  }

  .cost .c-name {
    width: 97px;
  }

  .cost td {
    background: #fff;
    text-align: right;
  }

  .cost td:last-child {
    color: #008000;
  }

  .voting {
    flex: none;
    height: 111px;
    padding: 2px 25px 0 9px;
    box-sizing: border-box;
  }

  .vote-bar {
    height: 74px;
    box-sizing: border-box;
    padding: 4px 5px 0;
    background: #6399cd;
  }

  .grades {
    display: flex;
    justify-content: center;
  }

  .grades label {
    width: 31px;
    display: flex;
    flex-direction: column;
    align-items: center;
    gap: 1px;
    color: #fff;
    font-size: 14px;
    font-weight: bold;
  }

  .grades span {
    height: 16px;
    line-height: 16px;
  }

  .grades input {
    appearance: none;
    width: 21px;
    height: 21px;
    border: 1px dotted transparent;
    display: grid;
    place-items: center;
    outline: none;
  }

  .grades input::before {
    content: "";
    width: 10px;
    height: 10px;
    border: 1px solid;
    border-color: #404040 #e8e6e0 #e8e6e0 #404040;
    border-radius: 50%;
    background: #fff;
  }

  .grades input:checked {
    border-color: #b06a28;
  }

  .grades input:checked::before {
    background: radial-gradient(circle, #000 2px, #fff 3px);
  }

  .buttons {
    display: flex;
    justify-content: space-between;
    margin-top: 7px;
  }

  .window .push {
    min-width: 99px;
    height: 18px;
    padding: 0 10px;
    border: 1px solid #12304f;
    border-radius: 3px;
    background: linear-gradient(#fff, #f2f4fb 60%, #fdeee0 75%, #fff);
    line-height: 14px;
    white-space: nowrap;
  }

  .window .push.light {
    min-width: 158px;
    background: #fff;
  }

  .counts {
    display: flex;
    align-items: center;
    gap: 4px;
    height: 19px;
    padding: 0 2px;
  }

  .right {
    margin-left: auto;
  }

  .criterion {
    flex: none;
    height: 61px;
    box-sizing: border-box;
    border-top: 2px solid #404040;
    border-left: 2px solid #404040;
    box-shadow: 0 -2px #d4d0c8;
    padding: 9px 7px 0 7px;
  }

  .criterion label {
    display: flex;
    align-items: center;
    gap: 4px;
    height: 16px;
  }

  .criterion-row {
    display: flex;
    gap: 5px;
    margin-top: 6px;
  }

  .criterion-row .crit {
    margin-right: auto;
  }

  .statusbar {
    flex: none;
    display: flex;
    gap: 2px;
    height: 19px;
    margin-top: 3px;
  }

  .cell {
    width: 22px;
    box-sizing: border-box;
    border: 1px solid;
    border-color: #808080 #fff #fff #808080;
    display: flex;
    align-items: center;
  }

  .cell.wide {
    flex: 1;
  }

  .cell.zone {
    width: 181px;
    gap: 5px;
    padding-left: 3px;
  }

  .resize {
    margin-left: auto;
    align-self: flex-end;
  }
</style>
